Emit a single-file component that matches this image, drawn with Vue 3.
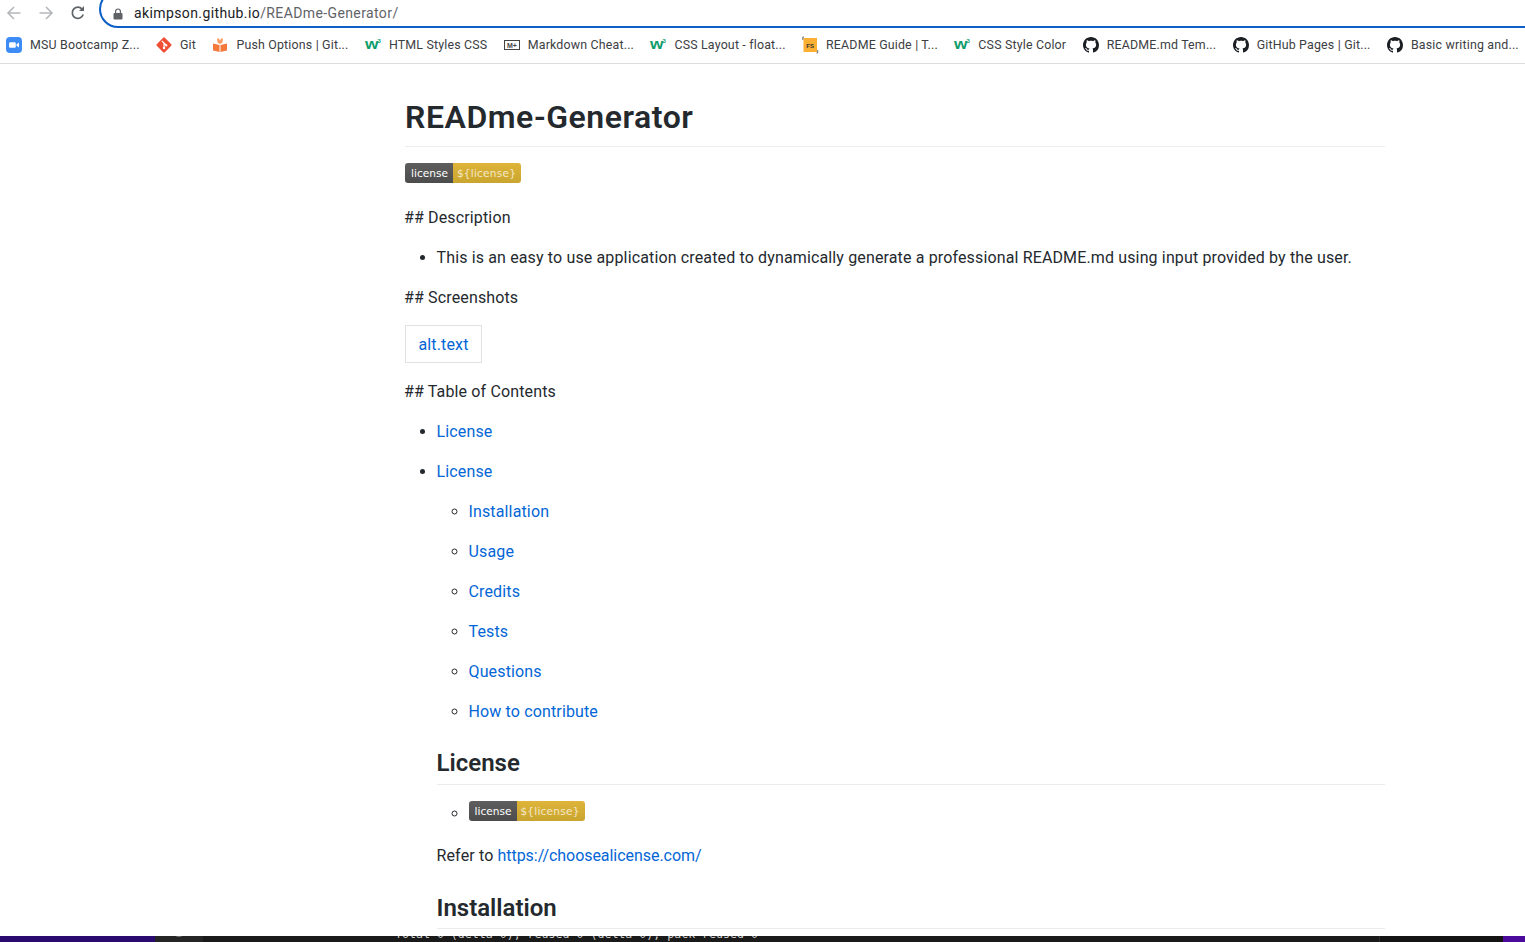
<script setup>
// 书签栏数据
const bookmarks = [
  { icon: 'zoom', label: 'MSU Bootcamp Z...' },
  { icon: 'git', label: 'Git' },
  { icon: 'box', label: 'Push Options | Git...' },
  { icon: 'w3', label: 'HTML Styles CSS' },
  { icon: 'md', label: 'Markdown Cheat...' },
  { icon: 'w3', label: 'CSS Layout - float...' },
  { icon: 'fs', label: 'README Guide | T...' },
  { icon: 'w3', label: 'CSS Style Color' },
  { icon: 'gh', label: 'README.md Tem...' },
  { icon: 'gh', label: 'GitHub Pages | Git...' },
  { icon: 'gh', label: 'Basic writing and...' }
]

const sections = ['Installation', 'Usage', 'Credits', 'Tests', 'Questions', 'How to contribute']
</script>

<template>
  <div class="page">
    <div class="toolbar">
      <svg class="nav" viewBox="0 0 16 16" fill="none" stroke="#b5b7ba" stroke-width="1.6">
        <path d="M14.5 8H2M8 2 2 8l6 6" />
      </svg>
      <svg class="nav" viewBox="0 0 16 16" fill="none" stroke="#b5b7ba" stroke-width="1.6">
        <path d="M1.5 8H14M8 2l6 6-6 6" />
      </svg>
      <svg class="nav" viewBox="0 0 16 16" fill="none" stroke="#5f6368" stroke-width="1.7">
        <path d="M13.2 9.6A5.6 5.6 0 1 1 12 4" />
        <path d="M14 1v5H9" fill="#5f6368" stroke="none" />
      </svg>
      <div class="omnibox">
        <svg class="lock" viewBox="0 0 10 12">
          <path d="M2 5V3.4a3 3 0 0 1 6 0V5h.6c.5 0 .9.4.9.9v4.7c0 .5-.4.9-.9.9H1.4c-.5 0-.9-.4-.9-.9V5.900c0-.5.4-.9.9-.9H2zm1.200 0h3.600V3.400a1.800 1.800 0 0 0-3.600 0V5z" fill="#5f6368" />
        </svg>
        <span class="url"><span class="host">akimpson.github.io</span>/READme-Generator/</span>
      </div>
    </div>

    <div class="bookmarks">
      <div v-for="(b, i) in bookmarks" :key="i" class="bookmark">
        <svg v-if="b.icon === 'zoom'" class="fav" viewBox="0 0 16 16">
          <rect width="16" height="16" rx="4" fill="#3d8bf5" />
          <rect x="3" y="5.200" width="6.800" height="5.600" rx="1.300" fill="#fff" />
          <path d="m10.500 7.300 2.500-1.800v5l-2.500-1.800z" fill="#fff" />
        </svg>
        <svg v-else-if="b.icon === 'git'" class="fav" viewBox="0 0 16 16">
          <rect x="2.300" y="2.300" width="11.400" height="11.400" rx="1.200" transform="rotate(45 8 8)" fill="#ee4e34" />
          <path d="M5.800 3.800 8 6l.1 5M8 6l2.300 2.400" stroke="#fff" stroke-width="1.200" fill="none" />
          <circle cx="8.100" cy="11" r="1.200" fill="#fff" />
          <circle cx="10.300" cy="8.400" r="1.100" fill="#fff" />
        </svg>
        <svg v-else-if="b.icon === 'box'" class="fav" viewBox="0 0 16 16">
          <path d="M1 6.500 7.500 8v7L1 13.500zM15 6.500 8.500 8v7l6.500-1.500z" fill="#f5793b" />
          <path d="M5 1.500h2L8 4l1-2.500h2l-.6 4L8 7 5.600 5.500z" fill="#fb9a5c" />
        </svg>
        <svg v-else-if="b.icon === 'w3'" class="fav" viewBox="0 0 16 16">
          <text x="0" y="11.500" transform="scale(1.150 1)" class="w3-w">w</text>
          <text x="12.500" y="5.500" class="w3-sup">3</text>
        </svg>
        <svg v-else-if="b.icon === 'md'" class="fav" viewBox="0 0 16 16">
          <rect x="0.500" y="3.500" width="15" height="9" fill="none" stroke="#444" />
          <text x="8" y="10.800" text-anchor="middle" class="md-text">M+</text>
        </svg>
        <svg v-else-if="b.icon === 'fs'" class="fav" viewBox="0 0 16 16">
          <rect x="1.500" y="1" width="13.500" height="14" fill="#fbb034" />
          <text x="8.200" y="10.500" text-anchor="middle" class="fs-text">FS</text>
          <path d="M2 0H.8v3M14.500 16h1.200v-3" fill="none" stroke="#333" stroke-width=".7" />
        </svg>
        <svg v-else class="fav" viewBox="0 0 16 16">
          <path fill="#1b1f23" d="M8 0C3.580 0 0 3.580 0 8c0 3.540 2.290 6.530 5.470 7.590.400.070.550-.170.550-.380 0-.190-.010-.820-.010-1.490-2.010.370-2.530-.490-2.690-.940-.090-.230-.480-.940-.820-1.130-.280-.150-.680-.520-.010-.530.630-.010 1.080.580 1.230.820.720 1.210 1.870.870 2.330.660.070-.520.280-.870.510-1.070-1.780-.200-3.640-.890-3.640-3.950 0-.870.310-1.590.820-2.150-.080-.200-.360-1.020.080-2.120 0 0 .670-.210 2.200.820.640-.180 1.320-.270 2-.270.680 0 1.360.090 2 .270 1.530-1.040 2.200-.820 2.200-.820.440 1.100.160 1.920.080 2.120.510.560.820 1.270.820 2.150 0 3.070-1.870 3.750-3.650 3.950.290.250.540.730.540 1.480 0 1.070-.010 1.930-.010 2.200 0 .210.150.460.550.380A8.013 8.013 0 0 0 16 8c0-4.420-3.580-8-8-8z" />
        </svg>
        <span class="bm-label">{{ b.label }}</span>
      </div>
    </div>

    <main class="viewport">
      <article class="markdown">
        <h1>READme-Generator</h1>
        <p class="badge-row">
          <span class="badge"><span class="badge-key">license</span><span class="badge-val">${license}</span></span>
        </p>
        <p class="hash">## Description</p>
        <ul>
          <li>This is an easy to use application created to dynamically generate a professional README.md using input provided by the user.</li>
        </ul>
        <p class="hash">## Screenshots</p>
        <p class="alt-row"><a class="alt-box">alt.text</a></p>
        <p class="hash">## Table of Contents</p>
        <ul>
          <li><a>License</a></li>
          <li>
            <a>License</a>
            <ul class="sub">
              <li v-for="s in sections" :key="s"><a>{{ s }}</a></li>
            </ul>
            <h2>License</h2>
            <ul class="sub badge-list">
              <li>
                <span class="badge"><span class="badge-key">license</span><span class="badge-val">${license}</span></span>
              </li>
            </ul>
            <p>Refer to <a class="ref-link">https://choosealicense.com/</a></p>
            <h2 class="install">Installation</h2>
          </li>
        </ul>
      </article>
    </main>

    <div class="dock">
      <div class="dock-purple"></div>
      <div class="dock-tab"><span class="dock-dot"></span></div>
      <div class="dock-term">
        <div class="term-line first">Total 0 (delta 0), reused 0 (delta 0), pack-reused 0</div>
        <div class="term-line second">remote: Resolving deltas: 100% (1/1), completed with 1 local object.</div>
      </div>
      <div class="dock-side"></div>
      <div class="dock-end"></div>
    </div>
  </div>
</template>

<style>
html, body {
  margin: 0;
  background: #fff;
}
</style>

<style scoped>
.page {
  width: 1525px;
  height: 942px;
  display: flex;
  flex-direction: column;
  overflow: hidden;
  font-family: Roboto, "Liberation Sans", sans-serif;
  color: #24292e;
}

.toolbar {
  height: 28px;
  flex: none;
  display: flex;
  align-items: flex-end;
  padding-left: 6px;
  overflow: hidden;
}

.nav {
  width: 16px;
  height: 16px;
  margin-right: 16px;
  margin-bottom: 7px;
  flex: none;
}

.omnibox {
  flex: none;
  width: 1460px;
  height: 38px;
  margin-left: -3px;
  box-sizing: border-box;
  border: 2px solid #0b5fc6;
  border-radius: 19px;
  display: flex;
  align-items: flex-end;
  padding: 0 0 4px 12px;
}

.lock {
  width: 10px;
  height: 12px;
  margin-bottom: 2px;
  flex: none;
}

.url {
  margin-left: 11px;
  font-size: 14px;
  letter-spacing: .39px;
  line-height: 17px;
  color: #5f6368;
  white-space: nowrap;
}

.host {
  color: #202124;
}

.bookmarks {
  height: 36px;
  flex: none;
  box-sizing: border-box;
  border-bottom: 1px solid #dadce0;
  display: flex;
  align-items: center;
  gap: 16.400px;
  padding: 0 0 2px 6px;
}

.bookmark {
  display: flex;
  align-items: center;
  gap: 8px;
  white-space: nowrap;
}

.fav {
  width: 16px;
  height: 16px;
  flex: none;
  overflow: visible;
}

.bm-label {
  font-size: 12.400px;
  letter-spacing: .18px;
  line-height: 16px;
  color: #3c4043;
}

.w3-w {
  font: 700 15px "Liberation Sans", sans-serif;
  fill: #0f9d6b;
}

.w3-sup {
  font: 700 6px "Liberation Sans", sans-serif;
  fill: #0f9d6b;
}

.md-text {
  font: 700 7px "Liberation Sans", sans-serif;
  fill: #444;
}

.fs-text {
  font: 700 6px "Liberation Sans", sans-serif;
  fill: #333;
}

.viewport {
  flex: 1;
  min-height: 0;
  overflow: hidden;
  padding: 33px 0 0 405px;
}

.markdown {
  width: 980px;
  font-size: 16px;
  letter-spacing: .14px;
  line-height: 24px;
}

h1 {
  margin: 0 0 16px;
  padding-bottom: 9px;
  font-size: 32px;
  letter-spacing: .55px;
  line-height: 40px;
  font-weight: 600;
  border-bottom: 1px solid #eaecef;
}

h2 {
  margin: 24px 0 16px;
  padding-bottom: 5.500px;
  font-size: 24px;
  letter-spacing: 0;
  line-height: 30px;
  font-weight: 600;
  border-bottom: 1px solid #eaecef;
}

h2.install {
  margin-top: 25px;
}

p {
  margin: 0 0 16px;
}

.hash {
  margin-left: -1px;
}

a {
  color: #0366d6;
}

.ref-link {
  letter-spacing: -.05px;
}

ul {
  margin: 0 0 16px;
  padding-left: 31.500px;
}

li + li {
  margin-top: 16px;
}

.sub {
  margin-top: 16px;
  padding-left: 32px;
  list-style: circle;
}

.badge-list {
  margin-top: 0;
  margin-bottom: 17px;
  line-height: 26px;
}

.badge-row {
  display: flex;
  margin-bottom: 23px;
}

.alt-row {
  display: flex;
  margin-bottom: 17px;
}

.alt-box {
  box-sizing: border-box;
  height: 38px;
  margin-top: -1px;
  padding: 7px 12.500px 6px;
  border: 1px solid #dfe2e5;
}

.badge {
  display: inline-flex;
  vertical-align: top;
  height: 20px;
  border-radius: 3px;
  overflow: hidden;
  font-family: "DejaVu Sans", sans-serif;
  font-size: 10.600px;
  letter-spacing: 0;
  line-height: 21px;
  color: #fff;
}

.badge-key {
  width: 48px;
  text-align: center;
  text-indent: 1px;
  background: linear-gradient(#5e5e5e, #4c4c4c);
}

.badge-val {
  width: 68px;
  text-align: center;
  text-indent: -1px;
  letter-spacing: .2px;
  color: #f3e8c6;
  background: linear-gradient(#dfb439, #c9a52f);
}

.dock {
  height: 6px;
  flex: none;
  display: flex;
  overflow: hidden;
  background: #141414;
}

.dock-purple {
  width: 155px;
  background: #2a0a6e;
}

.dock-tab {
  width: 48px;
  background: #252525;
  display: flex;
  justify-content: center;
}

.dock-dot {
  width: 14px;
  height: 14px;
  margin-top: -13px;
  box-sizing: border-box;
  border: 1px solid #777;
  border-radius: 50%;
}

.dock-term {
  flex: 1;
  min-width: 0;
  background: #1a1a1a;
  overflow: hidden;
  font-family: "DejaVu Sans Mono", monospace;
  font-size: 11.600px;
  line-height: 14px;
  color: #cfcfcf;
  white-space: nowrap;
}

.term-line.first {
  margin-top: -9px;
  padding-left: 192px;
}

.term-line.second {
  padding-left: 275px;
  opacity: .6;
}

.dock-side {
  width: 123px;
  background: #141414;
  border-left: 1px solid #2c2c2c;
}

.dock-end {
  width: 22px;
  background: #4b0a9c;
}
</style>
